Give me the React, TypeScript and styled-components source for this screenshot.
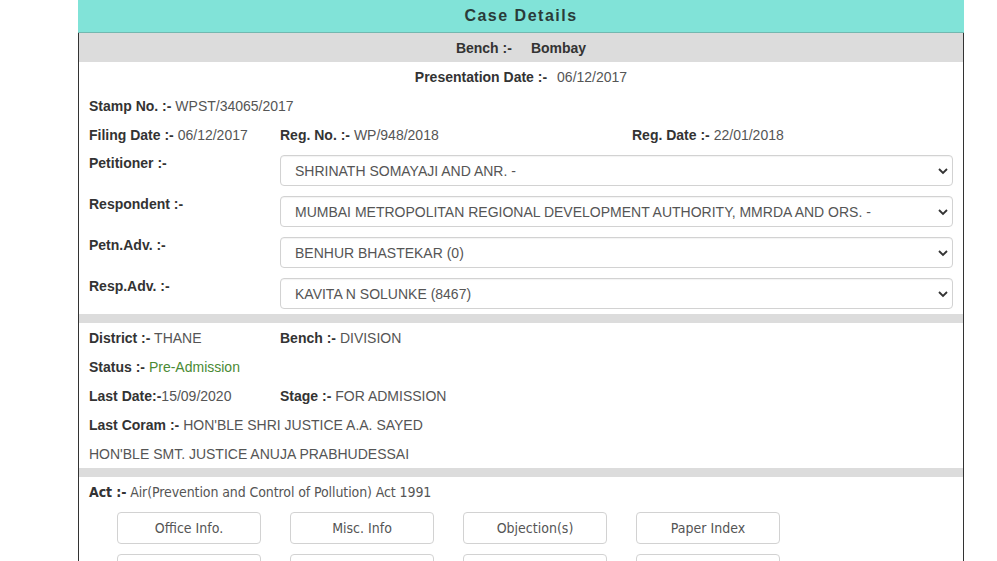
import styled, { createGlobalStyle } from "styled-components";

const GlobalStyle = createGlobalStyle`
  body {
    margin: 0;
    background: #fff;
    font-family: "Liberation Sans", Arial, sans-serif;
    font-size: 14px;
    color: #555;
  }
`;

const Page = styled.div`
  width: 886px;
  margin-left: 78px;
`;

const Header = styled.div`
  height: 32px;
  line-height: 32px;
  background: #81e3d8;
  border-bottom: 1px solid #73b8b0;
  text-align: center;
  font-weight: bold;
  font-size: 16px;
  letter-spacing: 1.5px;
  color: #2a3b39;
`;

const Panel = styled.div`
  border-left: 1px solid #333;
  border-right: 1px solid #333;
`;

const BenchBar = styled.div`
  height: 29px;
  background: #dcdcdc;
  display: flex;
  justify-content: center;
  align-items: center;
  gap: 19px;
  font-weight: bold;
  color: #333;
`;

const CenterRow = styled.div`
  height: 29px;
  display: flex;
  justify-content: center;
  align-items: center;
  gap: 10px;
`;

const Row = styled.div<{ $cols?: string }>`
  height: 29px;
  padding: 0 10px;
  display: grid;
  grid-template-columns: ${(p) => p.$cols || "191px 352px 1fr"};
  align-items: center;
`;

const Label = styled.b`
  color: #333;
`;

const Value = styled.span<{ $green?: boolean }>`
  color: ${(p) => (p.$green ? "#4a8a34" : "#555")};
`;

const SelectList = styled.div`
  padding: 6px 10px 5px;
  display: flex;
  flex-direction: column;
  gap: 10px;
`;

const SelectRow = styled.div`
  display: grid;
  grid-template-columns: 191px 1fr;
  align-items: start;
`;

const SelectLabel = styled.b`
  color: #333;
  line-height: 16px;
`;

const SelectWrap = styled.div`
  position: relative;
  height: 31px;
`;

const Select = styled.select`
  appearance: none;
  width: 100%;
  height: 31px;
  padding: 0 30px 0 14px;
  border: 1px solid #d2d2d2;
  border-radius: 4px;
  background: #fff;
  box-shadow: inset 0 1px 1px rgba(0, 0, 0, 0.05);
  font-family: "Liberation Sans", Arial, sans-serif;
  font-size: 14px;
  color: #555;
  outline: none;
`;

const Chevron = styled.svg`
  position: absolute;
  right: 4px;
  top: 12px;
  pointer-events: none;
`;

const Separator = styled.div`
  height: 9px;
  background: #dcdcdc;
`;

const Narrow = styled.div`
  height: 29px;
  padding: 0 10px;
  display: flex;
  align-items: center;
  font-family: "Liberation Sans Narrow", "DejaVu Sans Condensed", "Liberation Sans", sans-serif;
  font-stretch: condensed;
  letter-spacing: -0.1px;
`;

const ButtonGrid = styled.div`
  padding: 6px 0 10px 38px;
  display: grid;
  grid-template-columns: repeat(4, 144px);
  column-gap: 29px;
  row-gap: 10px;
`;

const Button = styled.button`
  height: 32px;
  border: 1px solid #d2d2d2;
  border-radius: 4px;
  background: #fff;
  color: #555;
  font-family: "Liberation Sans Narrow", "DejaVu Sans Condensed", "Liberation Sans", sans-serif;
  font-stretch: condensed;
  font-size: 14px;
`;

const parties = [
  { label: "Petitioner :-", value: "SHRINATH SOMAYAJI AND ANR. -" },
  { label: "Respondent :-", value: "MUMBAI METROPOLITAN REGIONAL DEVELOPMENT AUTHORITY, MMRDA AND ORS. -" },
  { label: "Petn.Adv. :-", value: "BENHUR BHASTEKAR (0)" },
  { label: "Resp.Adv. :-", value: "KAVITA N SOLUNKE (8467)" },
];

const buttons = [
  "Office Info.",
  "Misc. Info",
  "Objection(s)",
  "Paper Index",
  "Listing Dates",
  "Orders",
  "Connected Matters",
  "Lower Court",
];

export default function App() {
  return (
    <>
      <GlobalStyle />
      <Page>
        <Header>Case Details</Header>
        <Panel>
          <BenchBar>
            <span>Bench :-</span>
            <span>Bombay</span>
          </BenchBar>
          <CenterRow>
            <Label>Presentation Date :-</Label>
            <Value>06/12/2017</Value>
          </CenterRow>
          <Row $cols="1fr">
            <span>
              <Label>Stamp No. :-</Label> <Value>WPST/34065/2017</Value>
            </span>
          </Row>
          <Row>
            <span>
              <Label>Filing Date :-</Label> <Value>06/12/2017</Value>
            </span>
            <span>
              <Label>Reg. No. :-</Label> <Value>WP/948/2018</Value>
            </span>
            <span>
              <Label>Reg. Date :-</Label> <Value>22/01/2018</Value>
            </span>
          </Row>
          <SelectList>
            {parties.map((p) => (
              <SelectRow key={p.label}>
                <SelectLabel>{p.label}</SelectLabel>
                <SelectWrap>
                  <Select defaultValue={p.value}>
                    <option>{p.value}</option>
                  </Select>
                  <Chevron width="12" height="8" viewBox="0 0 12 8">
                    <path d="M2 2l4 4 4-4" fill="none" stroke="#333" strokeWidth="1.8" />
                  </Chevron>
                </SelectWrap>
              </SelectRow>
            ))}
          </SelectList>
          <Separator />
          <Row>
            <span>
              <Label>District :-</Label> <Value>THANE</Value>
            </span>
            <span>
              <Label>Bench :-</Label> <Value>DIVISION</Value>
            </span>
          </Row>
          <Row>
            <span>
              <Label>Status :-</Label> <Value $green>Pre-Admission</Value>
            </span>
          </Row>
          <Row>
            <span>
              <Label>Last Date:-</Label>
              <Value>15/09/2020</Value>
            </span>
            <span>
              <Label>Stage :-</Label> <Value>FOR ADMISSION</Value>
            </span>
          </Row>
          <Row $cols="1fr">
            <span>
              <Label>Last Coram :-</Label> <Value>HON'BLE SHRI JUSTICE A.A. SAYED</Value>
            </span>
          </Row>
          <Row $cols="1fr">
            <Value>HON'BLE SMT. JUSTICE ANUJA PRABHUDESSAI</Value>
          </Row>
          <Separator />
          <Narrow>
            <Label>Act :-</Label>&nbsp;<Value>Air(Prevention and Control of Pollution) Act 1991</Value>
          </Narrow>
          <ButtonGrid>
            {buttons.map((b) => (
              <Button key={b}>{b}</Button>
            ))}
          </ButtonGrid>
        </Panel>
      </Page>
    </>
  );
}
